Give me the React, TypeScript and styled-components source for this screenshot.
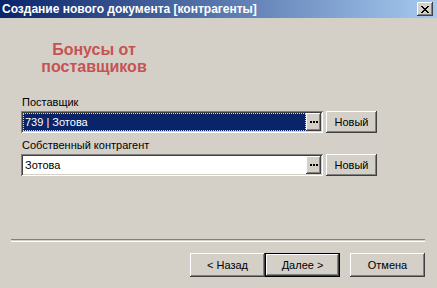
import styled, { createGlobalStyle } from 'styled-components';

const GlobalStyle = createGlobalStyle`
    html, body {
        margin: 0;
        padding: 0;
        overflow: hidden;
        background: #d4d0c8;
    }
`;

const Window = styled.div`
    width: 437px;
    height: 288px;
    background: #d4d0c8;
    display: flex;
    flex-direction: column;
    font-family: 'Liberation Sans', Arial, sans-serif;
    font-size: 11px;
    color: #000;
`;

const TitleBar = styled.div`
    height: 18px;
    display: flex;
    align-items: center;
    justify-content: space-between;
    padding: 0 4px 0 2px;
    background: linear-gradient(to right, #0a246a, #a6caf0);
`;

const Title = styled.span`
    color: #fff;
    font-weight: 700;
    font-size: 12px;
    white-space: nowrap;
`;

const CloseButton = styled.div`
    width: 16px;
    height: 14px;
    display: flex;
    align-items: center;
    justify-content: center;
    background: #d4d0c8;
    box-shadow: inset -1px -1px #404040, inset 1px 1px #fff, inset -2px -2px #808080;
`;

const Body = styled.div`
    flex: 1;
    display: flex;
    flex-direction: column;
    padding: 23px 0 0 21px;
`;

const Heading = styled.div`
    width: 146px;
    text-align: center;
    color: #c65353;
    font-size: 16px;
    font-weight: 700;
    line-height: 17px;
    margin-bottom: 21px;
`;

const Label = styled.div`
    line-height: 13px;
    margin: 0 0 2px 1px;
`;

const Row = styled.div`
    display: flex;
    gap: 3px;
    margin-bottom: 6px;
`;

const Field = styled.div`
    width: 302px;
    height: 22px;
    box-sizing: border-box;
    display: flex;
    align-items: stretch;
    background: #fff;
    box-shadow: inset 1px 1px #808080, inset -1px -1px #fff, inset 2px 2px #404040, inset -2px -2px #d4d0c8;
    padding: 2px;
`;

const FieldValue = styled.div<{ $selected?: boolean }>`
    flex: 1;
    display: flex;
    align-items: center;
    padding-left: 1px;
    box-sizing: border-box;
    background: ${(p) => (p.$selected ? '#0a246a' : '#fff')};
    color: ${(p) => (p.$selected ? '#fff' : '#000')};
    border: 1px dotted ${(p) => (p.$selected ? '#e8d890' : 'transparent')};
`;

const DotsButton = styled.div`
    width: 15px;
    display: flex;
    align-items: center;
    justify-content: center;
    background: #d4d0c8;
    box-shadow: inset -1px -1px #404040, inset 1px 1px #fff, inset -2px -2px #808080;
`;

const Button = styled.div<{ $default?: boolean }>`
    width: 75px;
    height: 24px;
    box-sizing: border-box;
    display: flex;
    align-items: center;
    justify-content: center;
    background: #d4d0c8;
    box-shadow: ${(p) =>
        p.$default
            ? 'inset 0 0 0 1px #000, inset -2px -2px #404040, inset 2px 2px #fff, inset -3px -3px #808080'
            : 'inset -1px -1px #404040, inset 1px 1px #fff, inset -2px -2px #808080'};
`;

const SmallButton = styled(Button)`
    width: 51px;
    height: 22px;
`;

const Separator = styled.div`
    height: 1px;
    margin: 0 12px 0 11px;
    border-top: 1px solid #808080;
    border-bottom: 1px solid #fff;
`;

const Footer = styled.div`
    display: flex;
    flex-direction: column;
    padding-bottom: 11px;
    gap: 11px;
`;

const ButtonRow = styled.div`
    display: flex;
    justify-content: flex-end;
    padding-right: 12px;
`;

const Spacer = styled.div`
    width: 10px;
`;

function CloseIcon() {
    return (
        <svg width="8" height="7" viewBox="0 0 8 7" shapeRendering="crispEdges">
            <path
                fill="#000"
                d="M0 0h2v1h-2zM6 0h2v1h-2zM1 1h2v1h-2zM5 1h2v1h-2zM2 2h4v1h-4zM3 3h2v1h-2zM2 4h4v1h-4zM1 5h2v1h-2zM5 5h2v1h-2zM0 6h2v1h-2zM6 6h2v1h-2z"
            />
        </svg>
    );
}

function Dots() {
    return (
        <svg width="8" height="2" viewBox="0 0 8 2" shapeRendering="crispEdges">
            <path fill="#000" d="M0 0h2v2h-2zM3 0h2v2h-2zM6 0h2v2h-2z" />
        </svg>
    );
}

interface LookupProps {
    label: string;
    value: string;
    selected?: boolean;
}

function Lookup(props: LookupProps) {
    return (
        <>
            <Label>{props.label}</Label>
            <Row>
                <Field>
                    <FieldValue $selected={props.selected}>{props.value}</FieldValue>
                    <DotsButton>
                        <Dots />
                    </DotsButton>
                </Field>
                <SmallButton>Новый</SmallButton>
            </Row>
        </>
    );
}

export default function App() {
    return (
        <Window>
            <GlobalStyle />
            <TitleBar>
                <Title>Создание нового документа [контрагенты]</Title>
                <CloseButton>
                    <CloseIcon />
                </CloseButton>
            </TitleBar>
            <Body>
                <Heading>
                    Бонусы от
                    <br />
                    поставщиков
                </Heading>
                <Lookup label="Поставщик" value="739 | Зотова" selected />
                <Lookup label="Собственный контрагент" value="Зотова" />
            </Body>
            <Footer>
                <Separator />
                <ButtonRow>
                    <Button>&lt; Назад</Button>
                    <Button $default>Далее &gt;</Button>
                    <Spacer />
                    <Button>Отмена</Button>
                </ButtonRow>
            </Footer>
        </Window>
    );
}
